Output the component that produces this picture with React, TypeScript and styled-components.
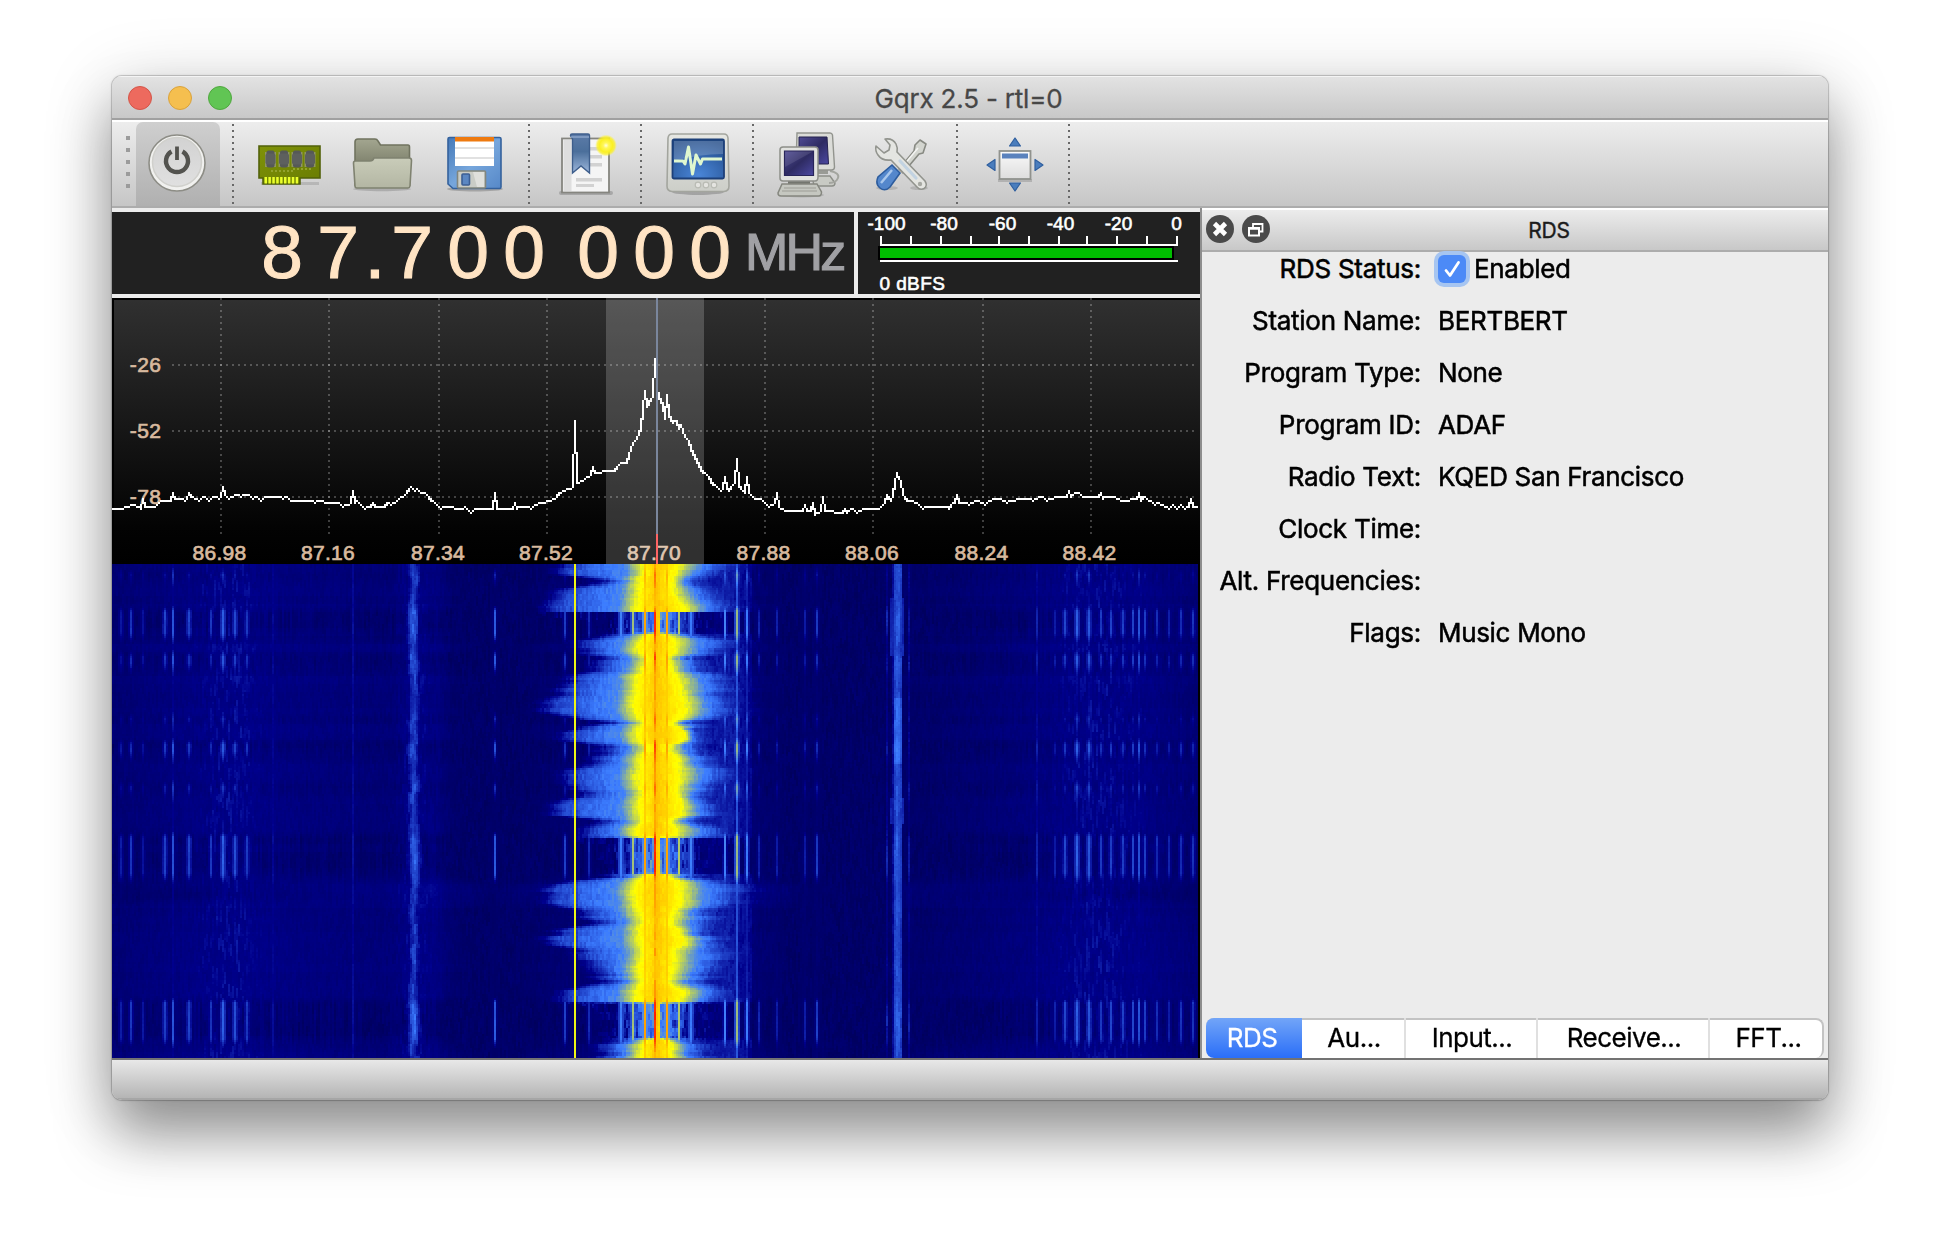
import React, { useLayoutEffect, useRef } from "react";
import styled, { createGlobalStyle } from "styled-components";

const UI = `Inter, "Liberation Sans", sans-serif`;
const HELV = `"Liberation Sans", Arial, sans-serif`;

const Global = createGlobalStyle`
  *, *::before, *::after { box-sizing: border-box; }
  body { margin: 0; background: #fff; }
`;

const Desktop = styled.div`
  width: 1940px;
  height: 1248px;
  padding: 76px 112px;
  overflow: hidden;
  background: #fff;
  font-family: ${UI};
`;

const Window = styled.div`
  display: flex;
  flex-direction: column;
  width: 1716px;
  height: 1024px;
  border-radius: 10px;
  overflow: hidden;
  background: #ececec;
  box-shadow:
    0 0 0 1px rgba(0, 0, 0, 0.13),
    0 0 2px 1px rgba(0, 0, 0, 0.1),
    0 36px 56px rgba(0, 0, 0, 0.36),
    0 10px 70px rgba(0, 0, 0, 0.18);
`;

const TitleBar = styled.header`
  display: grid;
  grid-template-columns: 1fr auto 1fr;
  align-items: center;
  height: 44px;
  padding: 1px 16px 0;
  background: linear-gradient(#e3e3e3, #c8c8c8);
  border-bottom: 2px solid #a0a0a0;
  box-shadow: inset 0 1px 0 #f4f4f4;
`;

const Lights = styled.div`
  display: flex;
  gap: 16px;
`;

const Light = styled.span<{ $fill: string; $edge: string }>`
  width: 24px;
  height: 24px;
  border-radius: 50%;
  background: ${(p) => p.$fill};
  border: 1px solid ${(p) => p.$edge};
`;

const Title = styled.h1`
  margin: 2px 3px 0 0;
  font-size: 26px;
  line-height: 32px;
  font-weight: 400;
  letter-spacing: -0.2px;
  color: #474747;
  -webkit-text-stroke: 0.3px;
`;

const ToolBar = styled.nav`
  display: flex;
  height: 88px;
  padding-left: 14px;
  background: linear-gradient(#ededed, #c6c6c6);
  border-top: 2px solid #fff;
  border-bottom: 2px solid #acacac;
`;

const Grip = styled.div`
  display: flex;
  flex-direction: column;
  gap: 8px;
  padding-top: 14px;
  width: 10px;
`;

const GripDot = styled.i`
  width: 4px;
  height: 4px;
  background: #9b9b9b;
`;

const ToolButton = styled.button<{ $w: number; $active?: boolean; $drop?: number }>`
  display: flex;
  align-items: center;
  justify-content: center;
  width: ${(p) => p.$w}px;
  height: 84px;
  padding: ${(p) => p.$drop ?? 0}px 0 0;
  border: 0;
  border-radius: 7px 7px 0 0;
  background: ${(p) => (p.$active ? "linear-gradient(#cfcfcf, #b0b0b0)" : "none")};
`;

const Separator = styled.i<{ $left: number; $right: number }>`
  width: 2px;
  height: 80px;
  margin: 2px ${(p) => p.$right}px 0 ${(p) => p.$left}px;
  background: repeating-linear-gradient(#686868 0 2px, transparent 2px 6px);
`;

const Main = styled.main`
  display: flex;
  height: 852px;
  border-bottom: 2px solid #737373;
`;

const Receiver = styled.section`
  display: flex;
  flex-direction: column;
  width: 1088px;
  padding-top: 4px;
  background: #ececec;
`;

const Readouts = styled.div`
  display: flex;
  gap: 4px;
  height: 82px;
  margin-bottom: 4px;
`;

const Frequency = styled.div`
  display: flex;
  justify-content: flex-end;
  width: 742px;
  padding-right: 10px;
  background: #212121;
  color: #ffe4c4;
  font-family: ${HELV};
  font-size: 75px;
  line-height: 81px;
  -webkit-text-stroke: 1.1px;
`;

const Digit = styled.span<{ $narrow?: boolean }>`
  display: flex;
  justify-content: center;
  width: ${(p) => (p.$narrow ? 18 : 56)}px;
`;

const Unit = styled.span`
  margin-left: 7px;
  font-size: 52px;
  letter-spacing: -2.8px;
  color: #a0a0a4;
  width: 99px;
`;

const Meter = styled.svg`
  display: block;
  width: 342px;
  height: 82px;
  background: #212121;
`;

const Spectrum = styled.svg`
  display: block;
  width: 1088px;
  height: 266px;
`;

const WaterfallFrame = styled.div`
  height: 494px;
  background: #000;
`;

const WaterfallCanvas = styled.canvas`
  display: block;
  width: 1086px;
  height: 494px;
  image-rendering: pixelated;
`;

const Dock = styled.aside`
  display: flex;
  flex-direction: column;
  flex: 1;
  border-left: 2px solid #8e8e8e;
  background: #ececec;
`;

const DockHeader = styled.header`
  display: flex;
  align-items: center;
  height: 44px;
  padding: 0 0 0 4px;
  border-top: 2px solid #fff;
  border-bottom: 2px solid #acacac;
  background: linear-gradient(#ececec, #c8c8c8);
`;

const DockButtons = styled.div`
  display: flex;
  gap: 8px;
  padding-bottom: 2px;
`;

const DockTitle = styled.h2`
  flex: 1;
  margin: 2px 0 0;
  text-align: center;
  font-size: 21px;
  line-height: 26px;
  font-weight: 400;
  letter-spacing: -0.2px;
  color: #1c1c1c;
  -webkit-text-stroke: 0.4px;
`;

const Form = styled.dl`
  display: grid;
  grid-template-columns: 219px 1fr;
  grid-auto-rows: 34px;
  row-gap: 18px;
  column-gap: 17px;
  flex: 1;
  margin: 0;
  font-size: 26px;
  line-height: 34px;
  letter-spacing: -0.32px;
  color: #000;
  -webkit-text-stroke: 0.55px;
`;

const Label = styled.dt`
  text-align: right;
  white-space: nowrap;
  letter-spacing: -0.28px;
`;

const Value = styled.dd`
  display: flex;
  align-items: center;
  gap: 8px;
  margin: 0;
  white-space: nowrap;
`;

const Check = styled.span`
  display: flex;
  width: 28px;
  height: 28px;
  border-radius: 6px;
  background: #4c8af7;
  box-shadow: 0 0 0 4px #a6c5f1;
`;

const Tabs = styled.div`
  display: flex;
  height: 40px;
  margin: 0 4px;
  border: 2px solid #c3c3c3;
  border-bottom: 0;
  border-left: 0;
  border-radius: 8px;
  background: #fff;
`;

const Tab = styled.button<{ $w: number; $selected?: boolean }>`
  width: ${(p) => p.$w}px;
  height: 40px;
  margin: -2px 0 0;
  padding: 0 ${(p) => (p.$selected ? 4 : 0)}px 0 ${(p) => (p.$selected ? 0 : 2)}px;
  border: 0;
  border-right: ${(p) => (p.$selected ? 0 : 2)}px solid #e0e0e0;
  border-radius: ${(p) => (p.$selected ? "8px 0 0 8px" : "0")};
  background: ${(p) => (p.$selected ? "linear-gradient(#72a5f8, #2a6ef8)" : "transparent")};
  color: ${(p) => (p.$selected ? "#fff" : "#000")};
  font-family: ${UI};
  font-size: 26px;
  line-height: 38px;
  letter-spacing: -0.5px;
  -webkit-text-stroke: 0.3px;
  &:last-child { border-right: 0; padding-left: 5px; }
`;

const StatusBar = styled.footer`
  height: 40px;
  background: linear-gradient(#e8e8e8, #b2b2b2);
  box-shadow: inset 0 -2px 0 #a6a6a6;
`;

/* ---------- toolbar icons ---------- */

const PowerIcon = () => (
  <svg width="64" height="64" viewBox="0 0 64 64">
    <defs>
      <linearGradient id="pw" x1="0" y1="0" x2="0" y2="1">
        <stop offset="0" stopColor="#d2d2d2" />
        <stop offset="1" stopColor="#e0e0e0" />
      </linearGradient>
    </defs>
    <circle cx="31" cy="31" r="28" fill="#f1f1ef" stroke="#8d8d86" strokeWidth="1.6" />
    <circle cx="31" cy="30" r="24.500" fill="url(#pw)" stroke="#d0d0cc" strokeWidth="1.500" />
    <path d="M25.500 19.500a11 11 0 1 0 11 0" fill="none" stroke="#53534f" strokeWidth="4.400" />
    <path d="M31 14.500v13.500" stroke="#53534f" strokeWidth="3.800" />
  </svg>
);

const CardIcon = () => (
  <svg width="66" height="44" viewBox="0 0 66 44">
    <defs>
      <linearGradient id="cd" x1="0" y1="0" x2="1" y2="1">
        <stop offset="0" stopColor="#7f9208" />
        <stop offset="1" stopColor="#697c02" />
      </linearGradient>
    </defs>
    <rect x="4" y="38" width="58" height="3" fill="#000" opacity=".12" />
    <path d="M2 2h61v32H43v6H6v-6H2z" fill="url(#cd)" stroke="#52610a" strokeWidth="1.600" />
    {[8, 21.500, 34.500, 47.500].map((x) => (
      <g key={x}>
        <rect x={x} y="8" width="11" height="15" fill="#8f9563" />
        <rect x={x + 1.500} y="6.500" width="8" height="17" rx="2" fill="#565957" />
        <rect x={x + 0.500} y="9.500" width="10" height="11" rx="2" fill="#5d605e" />
      </g>
    ))}
    <path d="M14 27h22M36 25h20" stroke="#9dac3c" strokeWidth="1.400" strokeDasharray="2 2" />
    {Array.from({ length: 9 }, (_, i) => (
      <rect key={i} x={7.5 + i * 3.9} y="33" width="2.500" height="6.500" fill="#eaff2c" />
    ))}
  </svg>
);

const FolderIcon = () => (
  <svg width="64" height="56" viewBox="0 0 64 56">
    <defs>
      <linearGradient id="fb" x1="0" y1="0" x2="0" y2="1">
        <stop offset="0" stopColor="#a3a690" />
        <stop offset=".6" stopColor="#7b7e69" />
      </linearGradient>
      <linearGradient id="ff" x1="0" y1="0" x2="0" y2="1">
        <stop offset="0" stopColor="#c9ccb9" />
        <stop offset="1" stopColor="#b3b6a3" />
      </linearGradient>
    </defs>
    <ellipse cx="32" cy="52" rx="29" ry="2.200" fill="#000" opacity=".16" />
    <path d="M5 48V5q0-3 3-3h17q2 0 3 2l2.500 4H58q1.500 0 1.500 2v38z" fill="url(#fb)" stroke="#70735f" strokeWidth="1.600" />
    <path d="M3.500 26q0-2 2-2H20q3 0 4-3h35q2.500 0 2.500 2.500L60 49q-.3 2-2 2H7q-2 0-2-2z" fill="url(#ff)" stroke="#7f8270" strokeWidth="1.600" />
  </svg>
);

const FloppyIcon = () => (
  <svg width="58" height="56" viewBox="0 0 58 56">
    <defs>
      <linearGradient id="fl" x1="0" y1="0" x2="1" y2="1">
        <stop offset="0" stopColor="#4579b8" />
        <stop offset=".5" stopColor="#76a6dc" />
        <stop offset="1" stopColor="#5688c8" />
      </linearGradient>
    </defs>
    <ellipse cx="29" cy="53" rx="28" ry="2.500" fill="#000" opacity=".2" />
    <path d="M2 3q0-1.500 1.500-1.500h50Q55 1.500 55 3v48q0 1.500-1.500 1.500H7L2 48z" fill="url(#fl)" stroke="#34619c" strokeWidth="1.600" />
    <rect x="9" y="2" width="39" height="28" fill="#fff" />
    <rect x="9" y="1" width="39" height="4.500" fill="#ee7a10" />
    <path d="M9 12h39M9 22h39" stroke="#d8d8d8" strokeWidth="1.600" />
    <rect x="11.500" y="35" width="28" height="17" rx="1" fill="#c9ccc6" stroke="#82867e" strokeWidth="1.600" />
    <path d="M27 36h11v15h-7z" fill="#dfe0dc" />
    <rect x="16" y="38" width="7.500" height="11" rx="1" fill="#5b87c2" stroke="#3c5f94" strokeWidth="1.600" />
  </svg>
);

const BookmarkIcon = () => (
  <svg width="64" height="64" viewBox="0 0 64 64">
    <defs>
      <linearGradient id="bm" x1="0" y1="0" x2="0" y2="1">
        <stop offset="0" stopColor="#5c7ba8" />
        <stop offset=".45" stopColor="#4b6f9b" />
        <stop offset="1" stopColor="#9db7dc" />
      </linearGradient>
      <radialGradient id="glow">
        <stop offset="0" stopColor="#fffde0" />
        <stop offset=".25" stopColor="#fff75a" />
        <stop offset=".6" stopColor="#fbf023" />
        <stop offset=".8" stopColor="#fbf023" stopOpacity=".75" />
        <stop offset="1" stopColor="#fff34a" stopOpacity="0" />
      </radialGradient>
    </defs>
    <rect x="5" y="59" width="54" height="4" rx="2" fill="#000" opacity=".18" />
    <rect x="8" y="6.500" width="47" height="54" fill="#f5f5f5" stroke="#85857f" strokeWidth="1.800" />
    <rect x="9.500" y="8" width="8" height="51" fill="#dedede" />
    <g fill="#d2d2d2">
      <rect x="36" y="15" width="12" height="3.500" />
      <rect x="36" y="23" width="12" height="3.500" />
      <rect x="36" y="31" width="12" height="3.500" />
      <rect x="22" y="46" width="26" height="3.500" />
      <rect x="22" y="52" width="18" height="3" />
    </g>
    <path d="M16.500 3.500Q16.500 2 18 2h16q1.500 0 1.500 1.500V41l-8.500-7-8.500 7V7z" fill="url(#bm)" stroke="#3e5e8c" strokeWidth="1.400" />
    <path d="M17 5h18" stroke="#8ba5ca" strokeWidth="1.400" />
    <circle cx="52" cy="13.500" r="11" fill="url(#glow)" />
  </svg>
);

const ScopeIcon = () => (
  <svg width="66" height="64" viewBox="0 0 66 64">
    <defs>
      <radialGradient id="sc" cx=".5" cy=".9" r=".9">
        <stop offset="0" stopColor="#4a86d8" />
        <stop offset="1" stopColor="#204a87" />
      </radialGradient>
      <linearGradient id="scb" x1="0" y1="0" x2="0" y2="1">
        <stop offset="0" stopColor="#e6e7e3" />
        <stop offset="1" stopColor="#cccec8" />
      </linearGradient>
    </defs>
    <ellipse cx="33" cy="60" rx="26" ry="3" fill="#000" opacity=".2" />
    <path d="M7 2h52q3.500 0 4 4l1 48q0 5-5 5.500H7Q2 59 2 54L3 6q.5-4 4-4z" fill="url(#scb)" stroke="#a3a59e" strokeWidth="1.600" />
    <rect x="7.500" y="7.500" width="51.500" height="39" rx="1.500" fill="url(#sc)" stroke="#1d4079" strokeWidth="1.800" />
    <path d="M9 9h49v13Q34 22 9 29z" fill="#fff" opacity=".2" />
    <path d="M9 29h9l2 3 3.500-17 4 27L31 23l4.500 9 2-5H57" fill="none" stroke="#dff7cf" strokeWidth="3" strokeLinejoin="round" />
    {[33, 41, 49].map((x) => (
      <circle key={x} cx={x} cy="53" r="2.800" fill="#e4e4e0" stroke="#b9bbb4" strokeWidth="1.200" />
    ))}
  </svg>
);

const NetworkIcon = () => (
  <svg width="66" height="68" viewBox="0 0 66 68">
    <defs>
      <linearGradient id="nt" x1="0" y1="0" x2="1" y2="1">
        <stop offset="0" stopColor="#504c94" />
        <stop offset=".5" stopColor="#2e2b62" />
        <stop offset="1" stopColor="#4c49a2" />
      </linearGradient>
    </defs>
    <ellipse cx="26" cy="64" rx="22" ry="2.500" fill="#000" opacity=".12" />
    <path d="M36 45h18l5 7q0 3-3 3H38z" fill="#c8cac4" stroke="#8c8e88" strokeWidth="1.400" />
    <path d="M54 40q10 2 8 7t-9 5" fill="none" stroke="#a3a59f" strokeWidth="2" />
    <path d="M42 38h10v5H42z" fill="#999b95" />
    <path d="M21 2h33q2 0 2.500 2l2 32q0 3-3 3H22q-2 0-2-2z" fill="#dbdcd8" stroke="#92948e" strokeWidth="1.400" />
    <path d="M23 6h28l1.500 27H23z" fill="url(#nt)" stroke="#25224f" strokeWidth="1" />
    <path d="M12 50h22v5H12z" fill="#74766f" />
    <path d="M6 53h35l4.500 8q0 4-3 4H5q-3 0-3-3z" fill="#c5c7c0" stroke="#85877f" strokeWidth="1.500" />
    <path d="M8 57h32M6 60h35" stroke="#aaaca4" strokeWidth="1.400" />
    <path d="M7 16h32q3 0 3 3v27q0 4-3 4H7q-3 0-3-3V19q0-3 3-3z" fill="#e1e2df" stroke="#8d8f89" strokeWidth="1.500" />
    <path d="M8.500 20h29v24.500h-29z" fill="url(#nt)" stroke="#282559" strokeWidth="1.200" />
    <path d="M9 20.500h28L9 36z" fill="#fff" opacity=".1" />
  </svg>
);

const ToolsIcon = () => (
  <svg width="56" height="56" viewBox="0 0 56 56">
    <ellipse cx="13" cy="51" rx="11" ry="2" fill="#000" opacity=".13" />
    <ellipse cx="45" cy="51" rx="9" ry="2" fill="#000" opacity=".13" />
    <path d="M46 3l6 4-3 9-4 1-16 19-4-4L40 14l1-6z" fill="#d3d5cf" stroke="#888a83" strokeWidth="1.600" strokeLinejoin="round" />
    <path d="M44 11L29 29" stroke="#f4f4f2" strokeWidth="1.600" />
    <path d="M18 28l8 8-10 14q-5 5-10 1t-2-11z" fill="#5487cc" stroke="#2d5c9d" strokeWidth="1.600" />
    <path d="M18 33L7 46" stroke="#a9c7ec" strokeWidth="2.500" />
    <path d="M11 2q8-1 11 5 2 4 1 8l28 29q3 5-1 7.500-4 2-7-1.500L17 23Q8 24 4 18 1 14 2 9l8 7 5-3 1-5z" fill="#e4e5e1" stroke="#92948e" strokeWidth="1.600" strokeLinejoin="round" />
    <path d="M26 24l16 17" stroke="#c2d3e2" strokeWidth="3.200" strokeLinecap="round" />
    <circle cx="46" cy="47" r="2.200" fill="#a6a8a2" />
  </svg>
);

const FullscreenIcon = () => (
  <svg width="60" height="58" viewBox="0 0 60 58">
    <defs>
      <linearGradient id="fs" x1="0" y1="0" x2="0" y2="1">
        <stop offset="0" stopColor="#fafafa" />
        <stop offset="1" stopColor="#ddd" />
      </linearGradient>
    </defs>
    <rect x="13" y="43" width="34" height="3" fill="#000" opacity=".15" />
    <rect x="14.500" y="15" width="31" height="28" fill="url(#fs)" stroke="#90928d" strokeWidth="1.800" />
    <rect x="17" y="17.500" width="26" height="5" fill="#5a82bd" />
    <g fill="#4a7dbd" stroke="#2f5f9f" strokeWidth="1.200" strokeLinejoin="round">
      <path d="M30 2l5.500 8h-11z" />
      <path d="M30 55l5.500-8h-11z" />
      <path d="M2 29l8-5.500v11z" />
      <path d="M58 29l-8-5.500v11z" />
    </g>
  </svg>
);

const CloseIcon = () => (
  <svg width="28" height="28" viewBox="0 0 28 28">
    <circle cx="14" cy="14" r="14" fill="#4a4a4a" />
    <path d="M8.500 8.500l11 11M19.500 8.500l-11 11" stroke="#fff" strokeWidth="4.600" />
  </svg>
);

const FloatIcon = () => (
  <svg width="28" height="28" viewBox="0 0 28 28">
    <circle cx="14" cy="14" r="14" fill="#4a4a4a" />
    <path d="M11 12V9h9.500v7.500H18" fill="none" stroke="#fff" strokeWidth="1.800" />
    <rect x="7" y="13" width="10" height="7.500" fill="none" stroke="#fff" strokeWidth="2" />
    <path d="M6 13.500h12" stroke="#fff" strokeWidth="2.600" />
  </svg>
);

/* ---------- signal meter ---------- */

const meterTicks = [22, 52, 82, 112, 140, 170, 200, 228, 258, 288, 318];
const meterLabels: [string, number][] = [
  ["-100", 28.5], ["-80", 86], ["-60", 144.5], ["-40", 202.5], ["-20", 260.5], ["0", 318.5],
];

const SignalMeter = () => (
  <Meter viewBox="0 0 342 82" fontFamily={HELV} fontSize="19" fill="#fff" stroke="none">
    {meterLabels.map(([t, x]) => (
      <text key={t} x={x} y="18" textAnchor="middle" stroke="#fff" strokeWidth=".6">{t}</text>
    ))}
    <g shapeRendering="crispEdges">
      {meterTicks.map((x) => <rect key={x} x={x} y="24" width="2" height="8" />)}
      <rect x="22" y="32" width="298" height="2" />
      <rect x="20" y="34" width="296" height="14" fill="#000" />
      <rect x="22" y="36" width="292" height="10" fill="#00be00" />
      <rect x="22" y="48" width="298" height="2" />
    </g>
    <text x="21.500" y="78" letterSpacing=".4" stroke="#fff" strokeWidth=".6">0 dBFS</text>
  </Meter>
);

/* ---------- spectrum ---------- */

const tracePoints: [number, number][] = [
  [0, 209], [11, 209], [17, 207], [20, 205], [26, 208], [28, 209], [31, 199], [33, 207], [42, 207], [45, 205], [49, 201],
  [59, 201], [61, 193], [63, 200], [72, 201], [75, 199], [77, 194], [79, 198], [86, 201], [92, 197], [96, 201], [102, 197],
  [106, 199], [109, 198], [111, 188], [113, 195], [117, 199], [124, 195], [129, 197], [134, 195], [140, 199], [145, 197],
  [149, 201], [154, 197], [165, 197], [170, 199], [175, 198], [179, 201], [197, 201], [202, 203], [209, 201], [213, 203],
  [227, 203], [231, 207], [237, 205], [239, 204], [241, 192], [243, 203], [245, 201], [249, 205], [253, 209], [259, 207],
  [261, 203], [263, 207], [272, 207], [275, 203], [278, 205], [283, 204], [286, 199], [293, 196], [299, 187], [302, 192],
  [305, 189], [309, 194], [314, 195], [318, 201], [324, 205], [329, 209], [336, 207], [342, 209], [350, 210], [353, 207],
  [358, 213], [362, 210], [378, 210], [381, 209], [383, 194], [385, 209], [393, 210], [401, 210], [403, 204], [405, 209],
  [414, 207], [418, 209], [424, 205], [437, 202], [442, 200], [447, 194], [454, 190], [459, 189], [461, 188], [463, 122],
  [465, 184], [467, 184], [472, 180], [477, 177], [479, 175], [481, 168], [483, 174], [486, 174], [492, 171], [497, 172],
  [503, 171], [509, 163], [515, 163], [517, 155], [521, 144], [524, 140], [528, 129], [531, 110], [533, 92], [535, 107],
  [538, 99], [541, 97], [543, 60], [545, 90], [547, 98], [550, 106], [553, 119], [555, 96], [557, 116], [561, 123],
  [565, 121], [567, 130], [569, 126], [572, 138], [577, 142], [579, 150], [584, 162], [591, 173], [597, 178], [601, 185],
  [608, 191], [611, 190], [613, 178], [615, 189], [617, 191], [620, 186], [623, 183], [625, 160], [627, 185], [629, 189],
  [632, 193], [635, 178], [637, 193], [642, 199], [651, 201], [656, 207], [663, 204], [665, 193], [667, 208], [672, 211],
  [690, 212], [693, 206], [695, 212], [699, 212], [701, 204], [703, 215], [709, 212], [711, 198], [713, 212], [730, 214],
  [732, 209], [735, 213], [740, 209], [745, 213], [755, 209], [767, 209], [770, 205], [773, 203], [775, 196], [778, 201],
  [781, 196], [783, 183], [785, 174], [787, 180], [789, 182], [791, 195], [794, 202], [803, 203], [810, 209], [819, 207],
  [836, 209], [841, 203], [843, 203], [845, 196], [847, 203], [856, 205], [864, 201], [872, 205], [879, 201], [889, 200],
  [895, 203], [907, 200], [916, 200], [921, 201], [930, 197], [935, 201], [948, 197], [955, 197], [957, 192], [959, 198],
  [965, 193], [970, 197], [979, 197], [986, 198], [988, 193], [991, 199], [1000, 197], [1009, 202], [1024, 200],
  [1027, 194], [1029, 202], [1031, 197], [1042, 205], [1044, 203], [1056, 209], [1061, 205], [1064, 209], [1068, 205],
  [1072, 209], [1077, 208], [1079, 200], [1081, 208], [1086, 209],
];

/* One 2px column per FFT bin, each reaching halfway towards its neighbours */
const tracePath = (() => {
  const pts = tracePoints.map(([x, y]) => [Math.floor(x / 2) * 2, y]);
  const ys: number[] = [];
  let k = 0;
  for (let x = 0; x < 1086; x += 2) {
    while (k < pts.length - 2 && pts[k + 1][0] <= x) k++;
    const [x0, y0] = pts[k];
    const [x1, y1] = pts[k + 1];
    const t = x1 === x0 ? 0 : (x - x0) / (x1 - x0);
    ys.push(Math.round((y0 + (y1 - y0) * t) / 2));
  }
  return ys
    .map((y, i) => {
      const a = ys[Math.max(0, i - 1)];
      const b = ys[Math.min(ys.length - 1, i + 1)];
      const ma = a > y ? Math.floor((a + y) / 2) : Math.ceil((a + y) / 2);
      const mb = b > y ? Math.floor((b + y) / 2) : Math.ceil((b + y) / 2);
      const top = Math.min(y, ma, mb);
      const bottom = Math.max(y, ma, mb) + 1;
      return `M${i * 2} ${top * 2}h2V${bottom * 2}h-2z`;
    })
    .join("");
})();

const gridX = [109, 217, 327, 435, 653, 761, 871, 979];
const freqLabels: [string, number][] = [
  ["86.98", 107.5], ["87.16", 216], ["87.34", 326], ["87.52", 434], ["87.70", 542],
  ["87.88", 651.5], ["88.06", 760], ["88.24", 869.5], ["88.42", 977.5],
];
const levelLabels: [string, number][] = [["-26", 67], ["-52", 133], ["-78", 199]];

const SpectrumPlot = () => (
  <Spectrum viewBox="0 0 1088 266">
    <defs>
      <linearGradient id="sky" x1="0" y1="0" x2="0" y2="1">
        <stop offset="0" stopColor="#303030" />
        <stop offset=".86" stopColor="#030303" />
        <stop offset="1" stopColor="#000" />
      </linearGradient>
    </defs>
    <rect width="1088" height="266" fill="#000" />
    <rect x="2" y="2" width="1086" height="264" fill="url(#sky)" />
    <g stroke="#fff" strokeOpacity=".24" strokeWidth="2" strokeDasharray="2 4" shapeRendering="crispEdges">
      {gridX.map((x) => <path key={x} d={`M${x} 0V236`} />)}
      {levelLabels.map(([t, y]) => <path key={t} d={`M60 ${y}H1086`} />)}
    </g>
    <g fontFamily={HELV} fontSize="21" letterSpacing=".3" fill="#d8ba9f" textAnchor="middle" stroke="#d8ba9f" strokeWidth=".7">
      {levelLabels.map(([t, y]) => <text key={t} x="33.500" y={y + 7}>{t}</text>)}
      {freqLabels.map(([t, x]) => <text key={t} x={x} y="261.500">{t}</text>)}
    </g>
    <g shapeRendering="crispEdges">
      <rect x="494" y="0" width="98" height="266" fill="#fff" fillOpacity=".19" />
      <path d={tracePath} fill="#fff" />
      <rect x="544" y="0" width="2" height="236" fill="#7a869c" />
      <rect x="544" y="236" width="2" height="30" fill="#ff6464" />
    </g>
  </Spectrum>
);

/* ---------- waterfall ---------- */

const COLS = 543;
const ROWS = 247;

/* Each row: time, blue edge left/right, yellow edge left/right (in canvas cells) */
const lobes: number[][] = [
  [0, 228, 308, 264, 284], [4, 230, 297, 265, 282], [8, 250, 290, 262, 281], [13, 226, 300, 262, 281],
  [23, 224, 304, 260, 288], [26, 228, 298, 262, 285], [28, 256, 287, 267, 277], [34, 256, 287, 267, 277],
  [38, 241, 304, 263, 282], [42, 239, 304, 261, 282], [47, 250, 289, 266, 279], [53, 247, 292, 264, 281],
  [56, 236, 302, 260, 283], [60, 231, 306, 261, 285], [65, 232, 300, 260, 286], [69, 224, 304, 259, 288],
  [73, 224, 304, 259, 288], [76, 234, 302, 261, 286], [79, 251, 290, 264, 281], [84, 229, 294, 261, 288],
  [87, 231, 292, 261, 288], [91, 253, 289, 265, 280], [98, 246, 297, 263, 284], [106, 231, 305, 261, 284],
  [110, 232, 300, 262, 284], [114, 244, 293, 264, 283], [119, 228, 297, 262, 286], [125, 228, 298, 262, 286],
  [128, 248, 292, 264, 280], [132, 240, 303, 260, 283], [138, 240, 302, 262, 281], [141, 256, 287, 268, 276],
  [155, 256, 287, 266, 278], [159, 229, 306, 260, 285], [163, 223, 309, 259, 286], [169, 225, 306, 260, 286],
  [174, 239, 298, 262, 282], [179, 248, 296, 264, 280], [183, 227, 296, 262, 285], [189, 223, 302, 262, 288],
  [193, 240, 302, 264, 282], [202, 243, 301, 262, 281], [208, 252, 293, 263, 279], [214, 230, 304, 260, 287],
  [218, 230, 300, 260, 285], [222, 250, 289, 265, 280], [225, 256, 287, 268, 276], [236, 256, 287, 267, 277],
  [240, 250, 292, 264, 280], [247, 248, 295, 262, 280],
];

/* Stretches with no modulation: from row, to row, strength */
const pauses: [number, number, number][] = [
  [2, 11, 0.5], [21, 39, 1.05], [43, 55, 0.8], [74, 83, 0.5], [87, 99, 0.82], [108, 118, 0.6], [134, 159, 1.1], [217, 241, 1.2],
];

/* Carrier comb: x cell, width, level while modulation pauses, level otherwise */
const comb: [number, number, number, number][] = [
  [4, 1.2, 76, 0], [9, 1.1, 82, 0], [15, 1, 74, 0], [26, 1.3, 85, 0], [30, 0.8, 89, 69], [38, 1.4, 86, 0], [49, 1.1, 82, 0],
  [55, 1.4, 92, 66], [61, 1.4, 88, 0], [67, 1.3, 83, 0], [80, 0.6, 72, 70], [120, 0.7, 73, 71], [191, 0.7, 91, 58],
  [226, 0.9, 84, 0], [238, 0.9, 79, 0], [254, 1.5, 100, 86], [260, 1.1, 126, 0], [266, 1, 186, 168], [277, 1, 186, 168],
  [283, 1, 130, 0], [289, 1.5, 100, 86], [306, 0.9, 102, 76], [312, 1.1, 124, 90], [317, 1, 100, 77], [323, 0.8, 78, 0],
  [332, 0.7, 76, 0], [346, 0.7, 76, 0], [352, 0.8, 84, 0], [462, 0.8, 78, 70], [471, 1, 77, 0], [476, 1.3, 86, 0],
  [482, 1.4, 92, 70], [488, 1.4, 90, 70], [494, 1.2, 84, 0], [499, 1.2, 85, 0], [505, 1.3, 84, 0], [510, 1, 86, 0],
  [513, 0.9, 89, 69], [516, 1.1, 84, 0], [522, 1.1, 80, 0], [528, 1, 77, 0], [534, 1.2, 81, 0], [540, 1.2, 82, 0],
];

const floorLevels: [number, number][] = [
  [0, 61], [30, 65], [65, 68], [95, 65], [140, 62], [150, 65], [162, 65], [170, 59], [190, 54], [220, 60], [300, 67],
  [320, 62], [345, 54], [385, 52], [395, 59], [405, 58], [440, 62], [480, 67], [515, 67], [542, 61],
];

const clamp01 = (t: number) => Math.min(1, Math.max(0, t));

const lookup = (table: number[][], x: number, col: number, smooth = false) => {
  let i = 0;
  while (i < table.length - 2 && table[i + 1][0] <= x) i++;
  const a = table[i];
  const b = table[i + 1];
  let t = clamp01((x - a[0]) / (b[0] - a[0]));
  if (smooth) t = t * t * (3 - 2 * t);
  return a[col] + (b[col] - a[col]) * t;
};

const hash = (x: number, y: number) => {
  let n = (x * 374761393 + y * 668265263) | 0;
  n = Math.imul(n ^ (n >>> 13), 1274126177);
  return (((n ^ (n >>> 16)) >>> 0) / 4294967295) * 2 - 1;
};

const palette = (v: number): [number, number, number] => {
  if (v < 20) return [0, 0, 0];
  if (v < 70) return [0, 0, (140 * (v - 20)) / 50];
  if (v < 100) return [(60 * (v - 70)) / 30, (125 * (v - 70)) / 30, (115 * (v - 70)) / 30 + 140];
  if (v < 150) return [(195 * (v - 100)) / 50 + 60, (130 * (v - 100)) / 50 + 125, 255 - (255 * (v - 100)) / 50];
  return [255, Math.max(0, 255 - (255 * (v - 150)) / 100), 0];
};

const pauseAt = (y: number) => {
  let q = 0;
  for (const [a, b, s] of pauses) {
    const edge = Math.min((y - a + 1) / 4, (b - y + 1) / 7);
    q = Math.max(q, s * clamp01(edge));
  }
  return q;
};

const lobeLevel = (x: number, bl: number, br: number, yl: number, yr: number) => {
  const c = 272;
  const left = x <= c;
  const yEdge = (left ? c - yl : yr - c) * 0.88;
  const bEdge = left ? c - bl : br - c;
  const d = Math.abs(x - c);
  if (d <= yEdge) return 173 - (24 * d) / yEdge;
  const fade = Math.min(left ? 9 : 11, (bEdge - yEdge) * 0.55);
  if (d <= yEdge + fade) return 149 - (45 * (d - yEdge)) / fade;
  if (d <= bEdge) return 104 - (17 * (d - yEdge - fade)) / Math.max(1, bEdge - yEdge - fade);
  return 87 - (d - bEdge) * (left ? 2.3 : 1.5);
};

const paint = (ctx: CanvasRenderingContext2D) => {
  const img = ctx.createImageData(COLS, ROWS);
  for (let y = 0; y < ROWS; y++) {
    const q = pauseAt(y);
    const jitter = hash(13, Math.floor(y / 2)) * 3;
    const bl = lookup(lobes, y, 1, true) + jitter;
    const br = lookup(lobes, y, 2, true) - jitter;
    const yl = lookup(lobes, y, 3, true) + hash(17, y) * 0.6;
    const yr = lookup(lobes, y, 4, true) + hash(19, y) * 0.6;
    const quiet = clamp01((q - 0.8) * 6);
    const rowTone = hash(7, Math.floor(y / 4)) * 1.3;
    const burst = Math.exp(-(((y - 164) / 6) ** 2));
    for (let x = 0; x < COLS; x++) {
      const band = Math.floor((y + ((x * 7) % 5)) / 5);
      const grain = hash(x, band) * 2 + hash(x + 900, y) * 0.8;
      let v = lookup(floorLevels, x, 1) + grain + rowTone - q * 4;
      const inner = clamp01((x - 40) / 120) * clamp01((500 - x) / 120);
      v += burst * (inner * 10 - 6);
      v += q * hash(x + 50, Math.floor(y / 40)) * 3;

      const humpL = Math.exp(-(((x - 57) / 14) ** 2));
      const humpR = Math.exp(-(((x - 492) / 20) ** 2));
      v += (humpL + humpR) * Math.max(0, hash(x + 31, Math.floor((y + ((x * 3) % 7)) / 6)) + 0.1) * 7.5;

      const wob = hash(3, Math.floor(y / 6)) * 0.6;
      const st = Math.exp(-(((x - 150.5 - wob) / 2.8) ** 2));
      v = Math.max(v, 57 + st * (23 + q * 8) + grain * 1.6);
      const stWide = Math.exp(-(((x - 150) / 9) ** 2));
      v += stWide * (2 + Math.max(0, hash(x + 77, Math.floor(y / 5))) * 7);

      const wide = (y > 16 && y < 46) || (y > 116 && y < 130);
      const core = Math.abs(x - 392.3);
      if (core < 1.8) v = Math.max(v, 90 - core * 4 + grain * 1.6 + (y > 66 && y < 100 ? 7 : 0) + q * 3);
      else if (core < (wide ? 3.4 : 2.4)) v = Math.max(v, (wide ? 78 : 72) + grain * 1.5);
      if (Math.abs(x - 387) < 0.6 || Math.abs(x - 398) < 0.6) v = Math.max(v, 67 + q * 8 + grain * 2);

      const dist = Math.abs(x - 272);
      let l = lobeLevel(x, bl, br, yl, yr);
      if (quiet > 0 && dist > 1) {
        const gap = 62 + Math.max(0, 22 - dist) * 2.1 + hash(x + 5, Math.floor(y / 4)) * 11;
        l = l + (Math.min(l, gap) - l) * quiet;
      }
      v = Math.max(v, l + hash(x + 11, Math.floor(y / 3)) * 3.4 + hash(x, y + 400) * 1.2);

      const skirt = 77 - Math.abs(x - 306) * 0.5 + grain * 1.5;
      if (Math.abs(x - 306) < 14) v = Math.max(v, skirt - quiet * 14);

      for (const [cx, w, hi, lo] of comb) {
        const d = Math.abs(x - cx);
        if (d > 2) continue;
        const level = lo > 0 ? lo + (hi - lo) * Math.min(1, q * 1.2) : 60 + (hi - 60) * Math.min(1, q * 1.1);
        const s = Math.exp(-((d / w) ** 2));
        v = Math.max(v, 58 + (level - 58) * s + grain * 0.8);
      }
      if (x === 271) v = Math.max(v, 182 + q * 44 + hash(1, Math.floor(y / 4)) * 10);
      if (x === 272) v = Math.max(v, 168);
      if (x === 231) v = 146;
      if (x === 232) v = Math.max(v - 4, 58);

      const [r, g, b] = palette(v);
      const o = (y * COLS + x) * 4;
      img.data[o] = r;
      img.data[o + 1] = g;
      img.data[o + 2] = b;
      img.data[o + 3] = 255;
    }
  }
  ctx.putImageData(img, 0, 0);
};

const Waterfall = () => {
  const ref = useRef<HTMLCanvasElement>(null);
  useLayoutEffect(() => {
    const ctx = ref.current?.getContext("2d");
    if (ctx) paint(ctx);
  }, []);
  return (
    <WaterfallFrame>
      <WaterfallCanvas ref={ref} width={COLS} height={ROWS} />
    </WaterfallFrame>
  );
};

/* ---------- page ---------- */

const rdsRows: [string, string][] = [
  ["Station Name:", "BERTBERT"],
  ["Program Type:", "None"],
  ["Program ID:", "ADAF"],
  ["Radio Text:", "KQED San Francisco"],
  ["Clock Time:", ""],
  ["Alt. Frequencies:", ""],
  ["Flags:", "Music Mono"],
];

export default function App() {
  return (
    <Desktop>
      <Global />
      <Window>
        <TitleBar>
          <Lights>
            <Light $fill="#ed6a5e" $edge="#d35548" />
            <Light $fill="#f5bf4f" $edge="#d9a23c" />
            <Light $fill="#61c554" $edge="#50a73f" />
          </Lights>
          <Title>Gqrx 2.5 - rtl=0</Title>
        </TitleBar>
        <ToolBar>
          <Grip>
            {[0, 1, 2, 3, 4].map((i) => <GripDot key={i} />)}
          </Grip>
          <ToolButton $w={84} $active><PowerIcon /></ToolButton>
          <Separator $left={12} $right={10} />
          <ToolButton $w={92} $drop={4}><CardIcon /></ToolButton>
          <ToolButton $w={92} $drop={1}><FolderIcon /></ToolButton>
          <ToolButton $w={94}><FloppyIcon /></ToolButton>
          <Separator $left={6} $right={10} />
          <ToolButton $w={92}><BookmarkIcon /></ToolButton>
          <Separator $left={8} $right={10} />
          <ToolButton $w={92}><ScopeIcon /></ToolButton>
          <Separator $left={8} $right={8} />
          <ToolButton $w={94} $drop={2}><NetworkIcon /></ToolButton>
          <ToolButton $w={92} $drop={2}><ToolsIcon /></ToolButton>
          <Separator $left={8} $right={10} />
          <ToolButton $w={94} $drop={1}><FullscreenIcon /></ToolButton>
          <Separator $left={6} $right={0} />
        </ToolBar>
        <Main>
          <Receiver>
            <Readouts>
              <Frequency>
                <Digit>8</Digit>
                <Digit>7</Digit>
                <Digit $narrow>.</Digit>
                <Digit>7</Digit>
                <Digit>0</Digit>
                <Digit>0</Digit>
                <Digit $narrow />
                <Digit>0</Digit>
                <Digit>0</Digit>
                <Digit>0</Digit>
                <Unit>MHz</Unit>
              </Frequency>
              <SignalMeter />
            </Readouts>
            <SpectrumPlot />
            <Waterfall />
          </Receiver>
          <Dock>
            <DockHeader>
              <DockButtons>
                <CloseIcon />
                <FloatIcon />
              </DockButtons>
              <DockTitle>RDS</DockTitle>
            </DockHeader>
            <Form>
              <Label>RDS Status:</Label>
              <Value>
                <Check>
                  <svg width="28" height="28" viewBox="0 0 28 28">
                    <path d="M8 15.500l4 5L20.500 7.500" fill="none" stroke="#fff" strokeWidth="2.800" strokeLinecap="round" strokeLinejoin="round" />
                  </svg>
                </Check>
                Enabled
              </Value>
              {rdsRows.map(([label, value]) => (
                <React.Fragment key={label}>
                  <Label>{label}</Label>
                  <Value>{value}</Value>
                </React.Fragment>
              ))}
            </Form>
            <Tabs>
              <Tab $w={96} $selected>RDS</Tab>
              <Tab $w={104}>Au...</Tab>
              <Tab $w={132}>Input...</Tab>
              <Tab $w={172}>Receive...</Tab>
              <Tab $w={112}>FFT...</Tab>
            </Tabs>
          </Dock>
        </Main>
        <StatusBar />
      </Window>
    </Desktop>
  );
}
